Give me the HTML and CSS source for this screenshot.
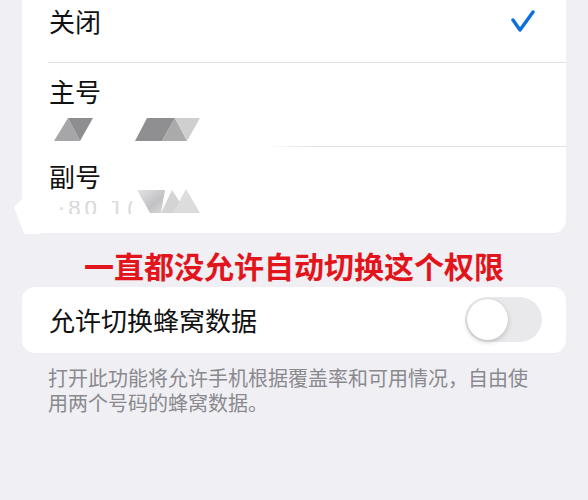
FILE: index.html
```html
<!DOCTYPE html>
<html lang="zh-CN">
  <head>
    <meta charset="utf-8">
    <title>蜂窝数据</title>
    <link rel="stylesheet" href="styles.css">
  </head>
  <body>
    <!-- 蜂窝数据号码选择 -->
    <div class="group">
      <div class="row row-single">
        <span class="label">关闭</span>
        <svg class="check" width="24" height="24" viewBox="0 0 24 24">
          <path d="M2 10 L9 20 L22 2" fill="none" stroke="#0b6fdf" stroke-width="3.4" stroke-linecap="round" stroke-linejoin="round"/>
        </svg>
      </div>
      <div class="row row-sim">
        <span class="label">主号</span>
        <svg class="mask" width="160" height="24" viewBox="0 0 160 24">
          <polygon points="14,0 0,23 26,23" fill="#a6a6a8"/>
          <polygon points="14,0 39,0 26,23" fill="#8e8e90"/>
          <polygon points="93,0 121,0 108,23 81,23" fill="#8f8f91"/>
          <polygon points="121,0 133,23 108,23" fill="#aaaaab"/>
          <polygon points="121,0 146,0 133,23" fill="#cfcfd0"/>
        </svg>
      </div>
      <div class="row row-sim row-last">
        <span class="label">副号</span>
        <svg class="mask mask-faint" width="160" height="26" viewBox="0 0 160 26">
          <defs>
            <clipPath id="digits">
              <rect x="0" y="13" width="80" height="13"/>
            </clipPath>
            <linearGradient id="fade" x1="0" y1="0" x2="1" y2="1">
              <stop offset="0" stop-color="#e4e4e5"/>
              <stop offset="0.6" stop-color="#c2c2c4"/>
              <stop offset="1" stop-color="#dadadb"/>
            </linearGradient>
          </defs>
          <text x="4" y="28" clip-path="url(#digits)" class="digits">·80 1(</text>
          <polygon points="83,2 111,2 107,25 96,25" fill="url(#fade)"/>
          <polygon points="107,25 118,2 133,25" fill="#d4d4d5"/>
          <polygon points="119,25 132,1 146,25" fill="#dcdcdd"/>
        </svg>
      </div>
    </div>
    <svg class="smudge" width="40" height="40" viewBox="0 0 40 40">
      <polygon points="22,4 14,12 24,39 40,39 40,4" fill="#fff"/>
    </svg>

    <p class="notice">一直都没允许自动切换这个权限</p>

    <div class="group">
      <div class="row row-toggle">
        <span class="label">允许切换蜂窝数据</span>
        <span class="switch"><span class="knob"></span></span>
      </div>
    </div>
    <p class="footer">打开此功能将允许手机根据覆盖率和可用情况，自由使用两个号码的蜂窝数据。</p>
  </body>
</html>
```

FILE: styles.css
```css
body {
  margin: 0;
  background: #efeff4;
  font-family: "Noto Sans CJK SC", "Noto Sans", sans-serif;
  color: #111;
  position: relative;
}

.group {
  margin: 0 22px;
  background: #fff;
  border-radius: 13px;
  overflow: hidden;
}

.group:first-child {
  margin-top: -21px;
}

.row {
  position: relative;
  padding: 0 31px 0 27px;
}

.row::after {
  content: "";
  position: absolute;
  left: 26px;
  right: 0;
  bottom: 0;
  height: 1px;
  background: #e1e1e5;
}

.row-last::after {
  display: none;
}

.label {
  font-size: 26px;
  line-height: 34px;
}

.row-single {
  height: 84px;
  display: flex;
  align-items: center;
  justify-content: space-between;
}

.check {
  display: block;
  margin-top: 1px;
}

.row-sim {
  display: flex;
  flex-direction: column;
  align-items: flex-start;
  padding-top: 11px;
  padding-bottom: 5px;
  height: 84px;
  box-sizing: border-box;
}

.row-sim .mask {
  display: block;
  margin-top: 10px;
  margin-left: 5px;
}

/* second divider fades in from the middle */
.row-sim + .row-sim {
  padding-top: 12px;
  padding-bottom: 19px;
  height: 86px;
}

.row-sim:nth-child(2)::after {
  background: linear-gradient(to right, rgba(225, 225, 229, 0) 0, rgba(225, 225, 229, 0) 220px, #e1e1e5 265px);
}

.row-sim .mask-faint {
  margin-top: -5px;
}

.digits {
  font-family: "DejaVu Sans", sans-serif;
  font-size: 21px;
  fill: #d9d9db;
  letter-spacing: 3px;
}

.smudge {
  position: absolute;
  left: 0;
  top: 195px;
}

.notice {
  margin: 0;
  padding-top: 11px;
  height: 54px;
  box-sizing: border-box;
  line-height: 42px;
  text-align: center;
  font-size: 30px;
  font-weight: 700;
  color: #e3151c;
}

.row-toggle {
  height: 66px;
  display: flex;
  align-items: center;
  justify-content: space-between;
  padding-right: 24px;
}

.row-toggle::after {
  display: none;
}

.switch {
  width: 77px;
  height: 45px;
  border-radius: 23px;
  background: #e9e9eb;
  position: relative;
  margin-top: -1px;
}

.knob {
  position: absolute;
  left: 2px;
  top: 2px;
  width: 41px;
  height: 41px;
  border-radius: 50%;
  background: #fff;
  box-shadow: 0 2px 5px rgba(0, 0, 0, 0.18), 0 0 1px rgba(0, 0, 0, 0.12);
}

.footer {
  margin: 0;
  padding: 12px 48px 0;
  font-size: 20px;
  line-height: 25px;
  color: #8a8a8e;
}
```
